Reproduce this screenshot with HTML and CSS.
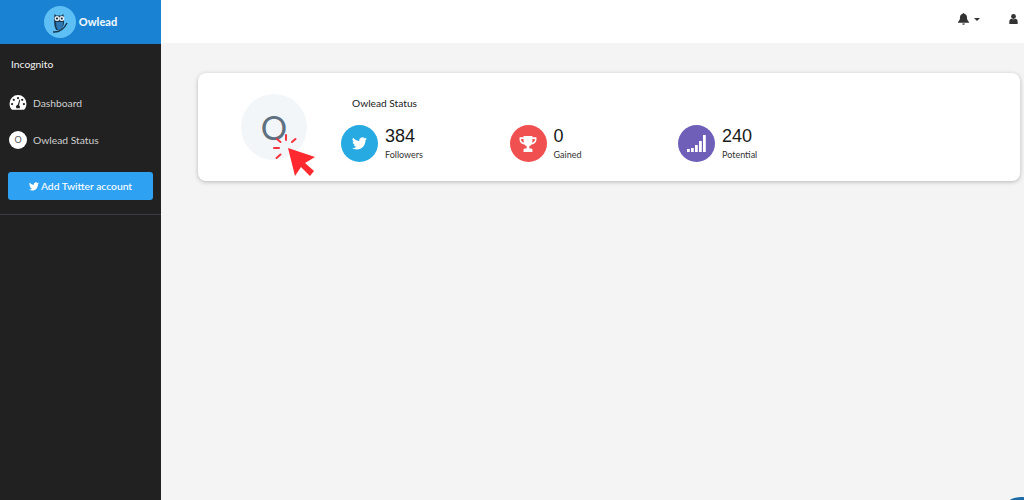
FILE: index.html
```html
<!DOCTYPE html>
<html lang="en">
<head>
<meta charset="utf-8">
<title>Owlead</title>
<link rel="stylesheet" href="styles.css">
</head>
<body>
<div class="app">
  <aside class="sidebar">
    <div class="brand">
      <span class="brand-logo">
        <svg viewBox="0 0 32 32" width="32" height="32">
          <path d="M10.500 8l2 1.500h5l2-1.500.5 8c0 4.500-2 7-5 8h-3l-1.500-4-.5-6z" fill="#17384f"/>
          <path d="M12 16h7l-.5 5c-1 2-2.500 3-4.500 3l-1.500-3z" fill="#2e78b5"/>
          <circle cx="13" cy="12.500" r="2.500" fill="#e8eef2"/>
          <circle cx="17.800" cy="12.500" r="2.500" fill="#e8eef2"/>
          <circle cx="13" cy="12.500" r="1.100" fill="#10283a"/>
          <circle cx="17.800" cy="12.500" r="1.100" fill="#10283a"/>
          <path d="M9 26c6 .5 11-3 14-9" fill="none" stroke="#17384f" stroke-width="1.500"/>
        </svg>
      </span>
      <span class="brand-name">Owlead</span>
    </div>
    <div class="user">Incognito</div>
    <nav class="nav">
      <a class="nav-item">
        <span class="nav-icon">
          <svg viewBox="0 0 18 16" width="18" height="15">
            <path fill-rule="evenodd" fill="#fff" d="M9 0a9 9 0 0 0-9 9c0 2.300.6 4.300 1.800 6 .3.400.7.600 1.200.600h12c.5 0 .9-.2 1.200-.6C17.400 13.300 18 11.300 18 9a9 9 0 0 0-9-9zM9 2a1.200 1.200 0 1 1 0 2.400A1.200 1.200 0 0 1 9 2zM4.500 3.900a1.200 1.200 0 1 1 0 2.400 1.200 1.200 0 0 1 0-2.400zm9 0a1.200 1.200 0 1 1 0 2.400 1.200 1.200 0 0 1 0-2.400zM2.700 8.400a1.200 1.200 0 1 1 0 2.400 1.200 1.200 0 0 1 0-2.400zm12.600 0a1.200 1.200 0 1 1 0 2.400 1.200 1.200 0 0 1 0-2.400zM10.500 4.800l.9.300-1.300 5.800c.6.400 1 1.100 1 1.800 0 .5-.2.900-.4 1.300H7.300a2.200 2.200 0 0 1 1.500-3.500z"/>
          </svg>
        </span>
        <span>Dashboard</span>
      </a>
      <a class="nav-item">
        <span class="nav-badge">O</span>
        <span>Owlead Status</span>
      </a>
    </nav>
    <div class="action">
      <button class="add-btn" type="button">
        <svg class="bird" viewBox="0 0 24 20" width="10" height="9">
          <path fill="#fff" d="M24 2.400a10 10 0 0 1-2.800.8A5 5 0 0 0 23.300.500a10 10 0 0 1-3.100 1.200 4.900 4.900 0 0 0-8.400 4.500A14 14 0 0 1 1.700.900a4.900 4.900 0 0 0 1.500 6.600 5 5 0 0 1-2.200-.6v.1a4.900 4.900 0 0 0 3.900 4.800 5 5 0 0 1-2.200.1 4.900 4.900 0 0 0 4.600 3.400A9.900 9.900 0 0 1 0 17.300 14 14 0 0 0 7.500 19.500c9.100 0 14-7.500 14-14v-.6A10 10 0 0 0 24 2.400z"/>
        </svg>
        <span>Add Twitter account</span>
      </button>
    </div>
  </aside>

  <div class="main">
    <header class="topbar">
      <span class="top-item">
        <svg viewBox="0 0 12 13" width="11" height="12">
          <path fill="#333" d="M6 0c.5 0 .8.400.8.800 1.900.4 3 2 3 3.900 0 2.800.8 3.700 2.200 5.100v.8H0v-.8c1.400-1.400 2.200-2.300 2.200-5.100 0-1.900 1.100-3.500 3-3.900C5.200.400 5.500 0 6 0zM4.500 11.400h3a1.500 1.500 0 0 1-3 0z"/>
        </svg>
        <span class="caret"></span>
      </span>
      <span class="top-user">
        <svg viewBox="0 0 10 12" width="9" height="10">
          <circle cx="5" cy="3" r="2.900" fill="#333"/>
          <path fill="#333" d="M0 12V9c0-2 1.300-3.200 2.800-3.400.7.400 1.400.6 2.200.6s1.500-.2 2.200-.6C8.700 5.800 10 7 10 9v3z"/>
        </svg>
      </span>
    </header>

    <main class="content">
      <section class="card">
        <div class="avatar">O</div>
        <div class="status">
          <h2 class="status-title">Owlead Status</h2>
          <div class="stats">
            <div class="stat">
              <span class="stat-icon twitter">
                <svg viewBox="0 0 24 20" width="15" height="13">
                  <path fill="#fff" d="M24 2.400a10 10 0 0 1-2.800.8A5 5 0 0 0 23.300.500a10 10 0 0 1-3.100 1.200 4.900 4.900 0 0 0-8.400 4.500A14 14 0 0 1 1.700.900a4.900 4.900 0 0 0 1.500 6.600 5 5 0 0 1-2.200-.6v.1a4.900 4.900 0 0 0 3.900 4.800 5 5 0 0 1-2.200.1 4.900 4.900 0 0 0 4.600 3.400A9.900 9.900 0 0 1 0 17.300 14 14 0 0 0 7.500 19.500c9.100 0 14-7.500 14-14v-.6A10 10 0 0 0 24 2.400z"/>
                </svg>
              </span>
              <div class="stat-text"><div class="stat-num">384</div><div class="stat-label">Followers</div></div>
            </div>
            <div class="stat">
              <span class="stat-icon trophy">
                <svg viewBox="0 0 20 18" width="18" height="16">
                  <path fill="#fff" fill-rule="evenodd" d="M5 0h10v1.500h4.500v2.700c0 2.800-2.400 5-5.400 5.400-.8 1-1.600 1.600-2.600 1.900v2.700h2c1 0 1.500.7 1.500 1.500V18H5v-2.300c0-.8.500-1.500 1.500-1.500h2v-2.700c-1-.3-1.800-.9-2.600-1.900C2.900 9.200.5 7 .5 4.200V1.500H5zM2.300 3.300v.9c0 1.500 1.100 2.800 3 3.400C5.100 6.300 5 4.900 5 3.300zm15.400 0H15c0 1.600-.1 3-.3 4.300 1.900-.6 3-1.900 3-3.400z"/>
                </svg>
              </span>
              <div class="stat-text"><div class="stat-num">0</div><div class="stat-label">Gained</div></div>
            </div>
            <div class="stat">
              <span class="stat-icon signal">
                <svg viewBox="0 0 19 17" width="19" height="17">
                  <g fill="#fff">
                    <rect x="0" y="14" width="2.800" height="3"/>
                    <rect x="4" y="13" width="2.800" height="4"/>
                    <rect x="8" y="10" width="2.800" height="7"/>
                    <rect x="12" y="6" width="2.800" height="11"/>
                    <rect x="16" y="0" width="2.800" height="17"/>
                  </g>
                </svg>
              </span>
              <div class="stat-text"><div class="stat-num">240</div><div class="stat-label">Potential</div></div>
            </div>
          </div>
        </div>
        <svg class="pointer" viewBox="0 0 46 46" width="46" height="46">
          <g stroke="#f5333f" stroke-width="2" stroke-linecap="round" fill="none">
            <path d="M6 8l3.500 3"/>
            <path d="M15 4v5"/>
            <path d="M24.500 8L21 11"/>
            <path d="M3 17h5"/>
            <path d="M5.500 27l4-3.500"/>
          </g>
          <path fill="#ff2a2f" d="M17 17l27 9-10 6 9 8-4 5-9-9-6 9z"/>
        </svg>
      </section>
    </main>
  </div>
</div>
<div class="corner"></div>
</body>
</html>
```

FILE: styles.css
```css
* { box-sizing: border-box; }
html, body { height: 100%; }
body {
  margin: 0;
  overflow: hidden;
  background: #f4f4f4;
  font-family: "Lato", "Liberation Sans", sans-serif;
  color: #222;
}
.app { display: flex; height: 500px; }

.sidebar {
  width: 161px;
  flex: none;
  background: #212121;
  color: #fff;
}
.brand {
  height: 44px;
  background: #1a82d2;
  display: flex;
  align-items: center;
  justify-content: center;
  gap: 3px;
  padding-bottom: 1px;
}
.brand-logo {
  width: 32px;
  height: 32px;
  border-radius: 50%;
  background: #5ebff5;
  display: flex;
}
.brand-name { font-size: 11px; font-weight: 900; color: #e8f4fc; }
.user {
  font-size: 10.300px;
  padding: 13px 11px 0;
  line-height: 14px;
  color: #f4f4f4;
}
.nav { display: flex; flex-direction: column; gap: 16px; padding: 21px 9px 0; }
.nav-item {
  display: flex;
  align-items: center;
  gap: 6px;
  height: 21px;
  font-size: 10.300px;
  color: #cfcfcf;
}
.nav-icon { width: 18px; display: flex; }
.nav-badge {
  width: 18px;
  height: 18px;
  border-radius: 50%;
  background: #fff;
  color: #555;
  font-size: 9px;
  display: flex;
  align-items: center;
  justify-content: center;
}
.action {
  margin-top: 22px;
  padding: 0 8px 14px;
  border-bottom: 1px solid #3b3d42;
}
.add-btn {
  width: 145px;
  height: 28px;
  border: 0;
  border-radius: 3px;
  background: #2ea1f2;
  color: #fff;
  font-family: inherit;
  font-size: 10.300px;
  font-weight: 500;
  display: flex;
  align-items: center;
  justify-content: center;
  gap: 2px;
  padding: 0;
}

.main { flex: 1; display: flex; flex-direction: column; min-width: 0; }
.topbar {
  height: 43px;
  background: #fff;
  display: flex;
  align-items: center;
  justify-content: flex-end;
  gap: 29px;
  padding: 0 6px 5px 0;
}
.top-item { display: flex; align-items: center; gap: 5px; }
.top-user { display: flex; }
.caret {
  width: 0;
  height: 0;
  border-left: 3px solid transparent;
  border-right: 3px solid transparent;
  border-top: 3px solid #333;
}
.content { padding: 30px 4px 0 37px; }
.card {
  position: relative;
  height: 108px;
  background: #fff;
  border-radius: 8px;
  box-shadow: 0 1px 4px rgba(0, 0, 0, .25);
  display: flex;
  align-items: flex-start;
  padding: 21px 0 0 43px;
}
.avatar {
  width: 66px;
  height: 66px;
  border-radius: 50%;
  background: #f2f6f9;
  color: #5f7080;
  font-size: 33px;
  display: flex;
  align-items: center;
  justify-content: center;
  flex: none;
}
.status { margin-left: 34px; margin-top: 2px; }
.status-title {
  margin: 0 0 0 11px;
  font-size: 10.200px;
  font-weight: 400;
  line-height: 14px;
  color: #222;
}
.stats { display: flex; margin-top: 15px; }
.stat { width: 168.500px; display: flex; align-items: center; gap: 7px; }
.stat-icon {
  width: 37px;
  height: 37px;
  border-radius: 50%;
  display: flex;
  align-items: center;
  justify-content: center;
  flex: none;
}
.twitter { background: #27aae1; }
.trophy { background: #f15050; }
.signal { background: #6f5fb8; }
.stat-num {
  font-family: "Liberation Sans", sans-serif;
  font-size: 18px;
  line-height: 20px;
  color: #1a1a1a;
}
.stat-label { font-size: 9px; line-height: 14px; margin-top: 2px; color: #333; }
.pointer { position: absolute; left: 73px; top: 58px; }
.corner {
  position: fixed;
  right: -16px;
  bottom: -19px;
  width: 36px;
  height: 22px;
  border-radius: 50%;
  background: #1c6aa6;
}
```
